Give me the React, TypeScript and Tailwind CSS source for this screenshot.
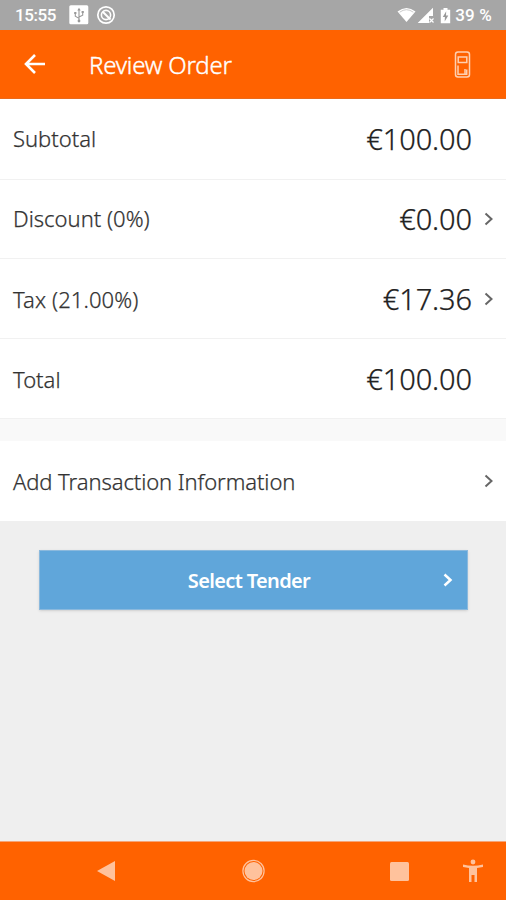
import React from 'react';

const ROWS = [
  { id: 'subtotal', label: 'Subtotal', amount: '€100.00', link: false, height: 'h-[81px]', text: 'pb-[2px] tracking-[0px]' },
  { id: 'discount', label: 'Discount (0%)', amount: '€0.00', link: true, height: 'h-[79px]', text: 'pb-[1px] tracking-[0px]' },
  { id: 'tax', label: 'Tax (21.00%)', amount: '€17.36', link: true, height: 'h-[80px]', text: 'pt-px tracking-[0.1px]' },
  { id: 'total', label: 'Total', amount: '€100.00', link: false, height: 'h-[80px]', text: 'pt-px tracking-[0px]' },
];

const Chevron: React.FC<{ className?: string }> = ({ className }) => (
  <svg className={className} width="10" height="14" viewBox="0 0 10 14" fill="none" stroke="currentColor">
    <path d="M1.5 1.5L7.5 7l-6 5.5" />
  </svg>
);

const StatusBar: React.FC = () => (
  <header className="flex h-[30px] items-center bg-[#a6a6a6] pl-[15px] pr-[14px] text-white">
    <span className="w-[54px] whitespace-nowrap pt-px font-[Roboto] text-[17px] font-medium leading-none tracking-[-0.4px]">15:55</span>
    <svg width="20" height="20" viewBox="0 0 20 20">
      <rect x="0.3" y="0.3" width="19" height="19" rx="1.5" fill="#fff" />
      <g fill="none" stroke="#999" strokeWidth="1.1">
        <path d="M10 4v12M10 13.4L6.3 11.2V8M10 12l3.7-1.8V7.5" />
      </g>
      <path d="M10 2.8l1.7 2.6H8.3zM5.2 7.1h2.2v2H5.2zM12.6 6.1h2.2v2h-2.2z" fill="#999" />
      <circle cx="10" cy="16" r="1.4" fill="#999" />
    </svg>
    <svg className="ml-[7px]" width="20" height="20" viewBox="0 0 20 20" fill="none" stroke="#fff">
      <circle cx="10" cy="10" r="8.2" strokeWidth="1.7" />
      <circle cx="10" cy="10" r="4.6" strokeWidth="1.6" />
      <path d="M6.7 6.7l7.8 7.8" strokeWidth="2" />
    </svg>
    <div className="ml-auto flex items-center">
      <svg width="19" height="16" viewBox="0 0 19 16">
        <path d="M.5 4.4Q9.5-2.6 18.5 4.4L9.5 15z" fill="#fff" />
        <path d="M2.7 5.2Q9.5.2 16.3 5.2" fill="none" stroke="#b5b5b5" strokeWidth=".7" />
      </svg>
      <svg className="ml-px" width="17" height="17" viewBox="0 0 17 17">
        <path d="M16 .7V9h-4v7H.7z" fill="#fff" />
        <path d="M12.5 11.5l4 4m0-4l-4 4" stroke="#fff" strokeWidth="1.2" />
      </svg>
      <svg className="ml-[6px]" width="11" height="17" viewBox="0 0 11 17">
        <path d="M3.5 1h4v1.8h2.7v13.4H.8V2.8h2.7z" fill="#fff" />
        <path d="M6.2 4.2L2.8 10h2.1l-.2 4.5L8.3 8.5H6z" fill="#999" />
      </svg>
      <span className="ml-[4px] whitespace-nowrap pt-px font-[Roboto] text-[17px] font-medium leading-none tracking-[0.2px]">39 %</span>
    </div>
  </header>
);

const App: React.FC = () => {
  return (
    <div className="flex h-[900px] w-[506px] flex-col overflow-hidden bg-[#efefef] font-['Noto_Sans',sans-serif] text-[#333]">
      <StatusBar />

      {/* Title bar */}
      <div className="flex h-[69px] items-center border-b border-[#ea6a1b] bg-[#ff6200] pl-[24px] pr-[35px] text-white">
        <svg width="22" height="20" viewBox="0 0 22 20" fill="none" stroke="currentColor" strokeWidth="2.6">
          <path d="M11 1L2 10l9 9M2.2 10H21" />
        </svg>
        <h1 className="ml-[43px] whitespace-nowrap pt-[2px] text-[24px] leading-none font-light tracking-[-0.2px] [-webkit-text-stroke:0.4px]">Review Order</h1>
        <svg className="ml-auto" width="17" height="27" viewBox="0 0 17 27" fill="none" stroke="#ffd0b0" strokeWidth="1.5">
          <rect x="1.5" y="1" width="14" height="25" rx="2.5" />
          <path d="M4.2 6h8.6v5.5H4.2zM4 14.5v8.7h8.7v-4.7M11 18v5" />
        </svg>
      </div>

      {/* Order lines */}
      <ul className="bg-white">
        {ROWS.map((row) => (
          <li key={row.id} className={`flex items-center border-b border-[#f1f1f1] pl-[13px] pr-[12px] ${row.height}`}>
            <span className={`whitespace-nowrap text-[22px] font-light [-webkit-text-stroke:0.25px] ${row.text}`}>{row.label}</span>
            <span className="ml-auto whitespace-nowrap text-[29px] font-light tracking-[-0.1px] text-[#222] [-webkit-text-stroke:0.25px]">{row.amount}</span>
            <span className="ml-[12px] w-[10px]">
              {row.link && <Chevron className="stroke-2 text-[#666]" />}
            </span>
          </li>
        ))}
      </ul>

      <div className="h-[22px] bg-[#f9f9f9]" />

      <div className="flex h-[80px] items-center justify-between bg-white pl-[13px] pr-[12px]">
        <span className="whitespace-nowrap text-[22px] font-light tracking-[-0.09px] [-webkit-text-stroke:0.25px]">Add Transaction Information</span>
        <Chevron className="stroke-2 text-[#666]" />
      </div>

      <main className="flex-1 pt-[29px] pr-[38px] pl-[39px]">
        <button className="grid h-[60px] w-full grid-cols-[1fr_auto_1fr] items-center border border-[#8bb9dd] bg-[#60a6da] pr-[14px] pl-[5px] text-white shadow-sm">
          <span />
          <span className="whitespace-nowrap pt-[2px] text-[20px] font-semibold leading-none tracking-[-0.65px]">Select Tender</span>
          <Chevron className="justify-self-end stroke-[2.5]" />
        </button>
      </main>

      {/* System navigation */}
      <nav className="flex h-[59px] items-center border-t border-[#f5a477] bg-[#ff6200] pl-[96px] text-[#ffc29c]">
        <svg width="20" height="22" viewBox="0 0 20 22">
          <path d="M1 11L19 1v20z" fill="currentColor" />
        </svg>
        <svg className="ml-[126px]" width="24" height="24" viewBox="0 0 24 24">
          <circle cx="11.5" cy="12" r="9" fill="currentColor" />
          <circle cx="11.5" cy="12" r="10.6" fill="none" stroke="currentColor" strokeWidth="1.2" />
        </svg>
        <svg className="ml-[123px]" width="21" height="21" viewBox="0 0 21 21">
          <rect x="1" y="1" width="19" height="19" rx="1.5" fill="currentColor" />
        </svg>
        <svg className="ml-[52px]" width="22" height="24" viewBox="0 0 22 24" fill="currentColor">
          <circle cx="11" cy="3" r="2.4" />
          <path d="M1 5.5Q11 8 21 5.5V8l-6 1v14h-2.5v-7h-3v7H7V9L1 8z" />
        </svg>
      </nav>
    </div>
  );
};

export default App;
